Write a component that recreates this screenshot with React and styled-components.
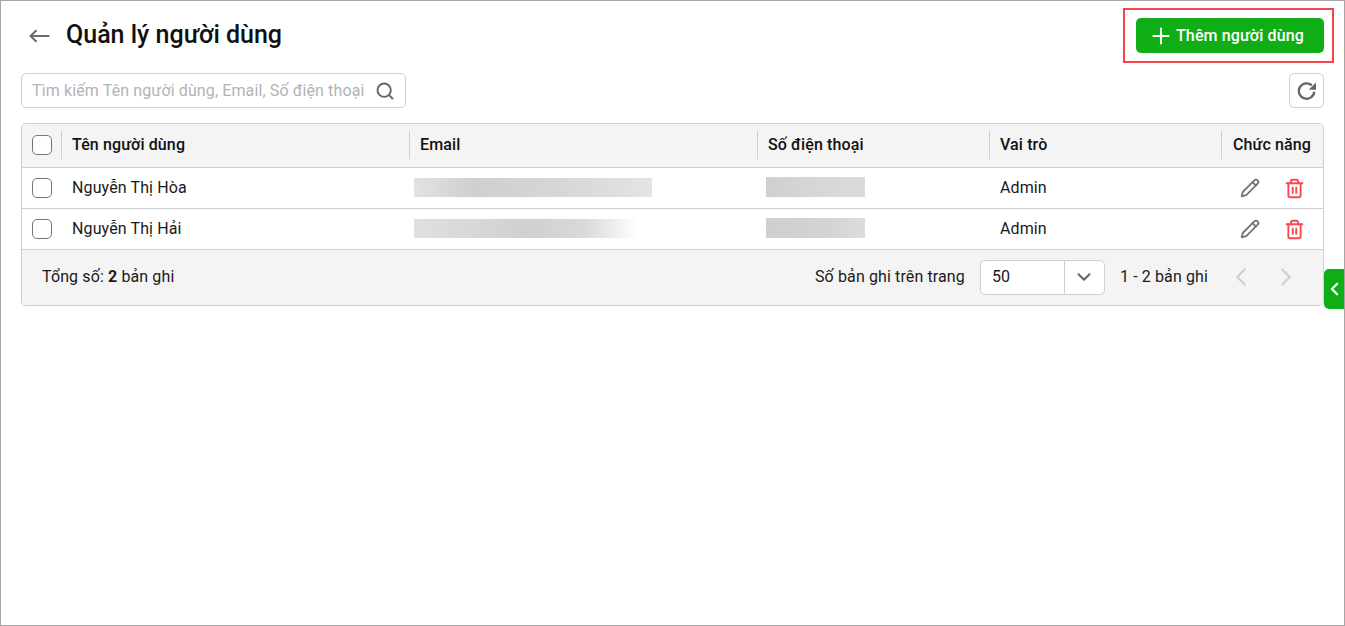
import React from "react";
import styled, { createGlobalStyle } from "styled-components";
import { Plus, Search, Pencil, Trash2, ChevronDown, ChevronLeft, ChevronRight } from "lucide-react";

const GlobalStyle = createGlobalStyle`
  html, body { margin: 0; padding: 0; background: #fff; }
  body { font-family: Roboto, "Liberation Sans", sans-serif; color: #1a1a1a; letter-spacing: 0.12px; }
  * { box-sizing: border-box; }
`;

const Frame = styled.div`
  position: relative;
  width: 1345px;
  height: 626px;
  border: 1px solid #a6a6a6;
  padding: 17px 20px 0;
  overflow: hidden;
`;

const TitleBar = styled.div`
  display: flex;
  align-items: center;
  justify-content: space-between;
  height: 35px;
  margin-bottom: 20px;
`;

const TitleLeft = styled.div`
  display: flex;
  align-items: center;
  gap: 16px;
  padding-left: 8px;
  color: #666;
`;

const Title = styled.h1`
  margin: 0;
  padding-bottom: 2px;
  font-size: 25px;
  line-height: 32px;
  font-weight: 500;
  letter-spacing: 0;
  color: #111;
`;

const AddButton = styled.button`
  display: flex;
  align-items: center;
  gap: 2px;
  width: 188px;
  height: 35px;
  padding: 0 0 0 12px;
  border: 0;
  border-radius: 5px;
  background: #0fae17;
  color: #fff;
  font: 500 16px Roboto, sans-serif;
  letter-spacing: 0.12px;
`;

const Callout = styled.div`
  position: absolute;
  left: 1122px;
  top: 7px;
  width: 211px;
  height: 55px;
  border: 2px solid #f5444a;
  pointer-events: none;
`;

const Toolbar = styled.div`
  display: flex;
  justify-content: space-between;
  margin-bottom: 15px;
`;

const SearchBox = styled.div`
  display: flex;
  align-items: center;
  justify-content: space-between;
  width: 385px;
  height: 35px;
  padding: 0 10px 0 10px;
  border: 1px solid #cfcfcf;
  border-radius: 5px;
  color: #666;
`;

const Placeholder = styled.span`
  font-size: 16px;
  color: #b3b3b3;
  white-space: nowrap;
`;

const IconButton = styled.button`
  display: flex;
  align-items: center;
  justify-content: center;
  width: 35px;
  height: 35px;
  padding: 0;
  background: #fff;
  border: 1px solid #cfcfcf;
  border-radius: 5px;
  color: #666;
`;

const Table = styled.div`
  width: 1303px;
  border: 1px solid #cfcfcf;
  border-radius: 5px;
  overflow: hidden;
`;

const columns = "39px 348px 348px 232px 232px 102px";

const HeadRow = styled.div`
  display: grid;
  grid-template-columns: ${columns};
  align-items: center;
  height: 43px;
  padding-bottom: 1px;
  background: #f4f4f4;
`;

const HeadCell = styled.div`
  display: flex;
  align-items: center;
  height: 28px;
  padding: 0 0 2px ${(p) => p.$pad || 10}px;
  border-left: 1px solid #cfcfcf;
  font-size: 16px;
  font-weight: 500;
  color: #111;
  white-space: nowrap;
`;

const BodyRow = styled.div`
  display: grid;
  grid-template-columns: ${columns};
  align-items: center;
  height: 41px;
  border-top: 1px solid #cfcfcf;
  font-size: 16px;
  color: #1a1a1a;
`;

const CheckCell = styled.div`
  display: flex;
  align-items: center;
  padding-left: 10px;
`;

const Check = styled.span`
  display: block;
  width: 20px;
  height: 20px;
  background: #fff;
  border: 1px solid #757575;
  border-radius: 5px;
`;

const Cell = styled.div`
  padding: 0 0 2px 11px;
  white-space: nowrap;
`;

const BlurCell = styled.div`
  align-self: end;
  padding: 0 0 11px ${(p) => p.$inset}px;
`;

const Blurred = styled.div`
  width: ${(p) => p.$width}px;
  height: ${(p) => p.$height}px;
  background: ${(p) => p.$fill};
`;

const Actions = styled.div`
  display: flex;
  align-items: center;
  gap: 24px;
  padding-left: 19px;
`;

const Footer = styled.div`
  display: flex;
  align-items: center;
  justify-content: space-between;
  height: 56px;
  padding: 0 22px 1px 20px;
  border-top: 1px solid #cfcfcf;
  background: #f4f4f4;
  font-size: 16px;
  color: #1a1a1a;
`;

const Pager = styled.div`
  display: flex;
  align-items: center;
  gap: 15px;
  color: #cfcfcf;
`;

const FooterLabel = styled.span`
  padding-bottom: 2px;
  color: #1a1a1a;
  white-space: nowrap;
`;

const PageSize = styled.div`
  display: grid;
  grid-template-columns: 84px 1fr;
  align-items: center;
  width: 125px;
  height: 35px;
  background: #fff;
  border: 1px solid #cfcfcf;
  border-radius: 5px;
  color: #666;
`;

const PageValue = styled.span`
  display: flex;
  align-items: center;
  height: 33px;
  padding: 0 0 2px 11px;
  border-right: 1px solid #cfcfcf;
  color: #1a1a1a;
`;

const PageArrow = styled.span`
  display: flex;
  justify-content: center;
`;

const PageNav = styled.div`
  display: flex;
  align-items: center;
  gap: 15px;
  margin-left: 3px;
`;

const SideTab = styled.div`
  position: absolute;
  right: -1px;
  top: 268px;
  display: flex;
  align-items: center;
  justify-content: center;
  width: 21px;
  height: 40px;
  background: #0fae17;
  border-radius: 5px 0 0 5px;
  color: #fff;
`;

const BackArrow = () => (
  <svg width="21" height="14" viewBox="0 0 21 14" fill="none" stroke="currentColor" strokeWidth="1.9">
    <path d="M1.5 7H20.5" />
    <path d="M7.5 1.2L1.5 7L7.5 12.8" />
  </svg>
);

const RefreshIcon = () => (
  <svg width="22" height="22" viewBox="0 0 20 20" fill="none">
    <path d="M16.6 10.5a7 7 0 1 1-2.2-5.6" stroke="currentColor" strokeWidth="2.1" />
    <path d="M18.2 2.2V8.8H11.6Z" fill="currentColor" />
  </svg>
);

const users = [
  {
    name: "Nguyễn Thị Hòa",
    email: { width: 238, fill: "linear-gradient(90deg,#e2e2e0,#cfcfcf 25%,#d6d6d6 60%,#e3e4e5)" },
    phone: "linear-gradient(90deg,#cfcfcf,#d6d6d6 50%,#dadbdc)",
  },
  {
    name: "Nguyễn Thị Hải",
    email: { width: 228, fill: "linear-gradient(90deg,#e0e0e0,#cfd0d0 50%,#d8d9db 75%,#ffffff 98%)" },
    phone: "linear-gradient(90deg,#cfcfcf,#d3d3d3 60%,#dcdcdc)",
  },
];

export default function App() {
  return (
    <>
      <GlobalStyle />
      <Frame>
        <TitleBar>
          <TitleLeft>
            <BackArrow />
            <Title>Quản lý người dùng</Title>
          </TitleLeft>
          <AddButton>
            <Plus size={26} strokeWidth={1.9} />
            Thêm người dùng
          </AddButton>
        </TitleBar>
        <Callout />
        <Toolbar>
          <SearchBox>
            <Placeholder>Tìm kiếm Tên người dùng, Email, Số điện thoại</Placeholder>
            <Search size={20} strokeWidth={2.3} />
          </SearchBox>
          <IconButton>
            <RefreshIcon />
          </IconButton>
        </Toolbar>
        <Table>
          <HeadRow>
            <CheckCell>
              <Check />
            </CheckCell>
            <HeadCell>Tên người dùng</HeadCell>
            <HeadCell>Email</HeadCell>
            <HeadCell>Số điện thoại</HeadCell>
            <HeadCell>Vai trò</HeadCell>
            <HeadCell $pad={11}>Chức năng</HeadCell>
          </HeadRow>
          {users.map((u) => (
            <BodyRow key={u.name}>
              <CheckCell>
                <Check />
              </CheckCell>
              <Cell>{u.name}</Cell>
              <BlurCell $inset={5}>
                <Blurred $width={u.email.width} $height={19} $fill={u.email.fill} />
              </BlurCell>
              <BlurCell $inset={9}>
                <Blurred $width={99} $height={20} $fill={u.phone} />
              </BlurCell>
              <Cell>Admin</Cell>
              <Actions>
                <Pencil size={20} strokeWidth={2.2} color="#757575" />
                <Trash2 size={21} strokeWidth={2.2} color="#f74a50" />
              </Actions>
            </BodyRow>
          ))}
          <Footer>
            <FooterLabel>
              Tổng số: <b>2</b> bản ghi
            </FooterLabel>
            <Pager>
              <FooterLabel>Số bản ghi trên trang</FooterLabel>
              <PageSize>
                <PageValue>50</PageValue>
                <PageArrow>
                  <ChevronDown size={22} strokeWidth={2.2} />
                </PageArrow>
              </PageSize>
              <FooterLabel>1 - 2 bản ghi</FooterLabel>
              <PageNav>
                <ChevronLeft size={30} strokeWidth={1.7} />
                <ChevronRight size={30} strokeWidth={1.7} />
              </PageNav>
            </Pager>
          </Footer>
        </Table>
        <SideTab>
          <ChevronLeft size={22} strokeWidth={2.6} />
        </SideTab>
      </Frame>
    </>
  );
}
